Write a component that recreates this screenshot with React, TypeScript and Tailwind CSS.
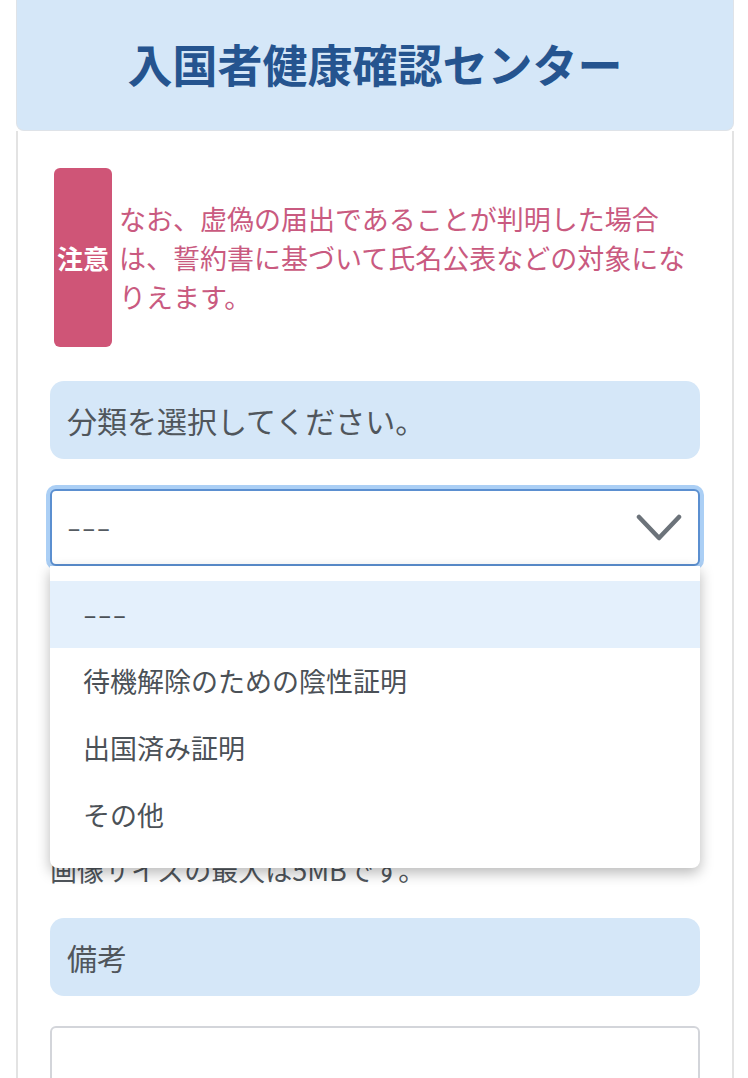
import React from 'react';

const font = { fontFamily: '"Noto Sans CJK JP", "Noto Sans", sans-serif' };

const options = ['---', '待機解除のための陰性証明', '出国済み証明', 'その他'];

const Dashes = () => <span className="inline-block origin-left scale-x-[1.5] tracking-[0.5px]">---</span>;

const App = () => {
  return (
    <div className="min-h-[1078px] bg-white" style={font}>
      {/* Header */}
      <div className="ml-[16px] w-[718px] h-[131px] bg-[#d5e7f8] rounded-b-[8px] border border-t-0 border-[#dfe3e8] flex items-center justify-center pb-[4px]">
        <h1 className="text-[45px] font-bold text-[#25548f] leading-none">入国者健康確認センター</h1>
      </div>

      {/* Card */}
      <div className="ml-[16px] w-[718px] border-x-2 border-[#e3e3e3] px-[32px] pt-[37px] pb-[40px]">
        {/* Caution */}
        <div className="flex items-center gap-[7px] pl-[4px]">
          <div className="w-[58px] h-[179px] bg-[#cf5577] rounded-[6px] flex items-center justify-center shrink-0">
            <span className="text-white font-bold text-[26px] leading-none">注意</span>
          </div>
          <p className="text-[27px] leading-[39px] text-[#c95a80] whitespace-nowrap">
            なお、虚偽の届出であることが判明した場合
            <br />
            は、誓約書に基づいて氏名公表などの対象にな
            <br />
            りえます。
          </p>
        </div>

        {/* Category label */}
        <div className="mt-[34px] h-[78px] bg-[#d5e7f8] rounded-[14px] flex items-center px-[17px]">
          <span className="text-[30px] text-[#50565c]">分類を選択してください。</span>
        </div>

        {/* Select with open list */}
        <div className="relative mt-[30px]">
          <div className="h-[77px] rounded-[6px] border-2 border-[#5b8fd0] ring-4 ring-[#abcff5] bg-white flex items-center justify-between pl-[15px] pr-[16px]">
            <span className="text-[27px] text-[#555b61]"><Dashes /></span>
            <svg width="46" height="28" viewBox="0 0 46 28" fill="none">
              <path d="M3 3 L23 24 L43 3" stroke="#6c737a" strokeWidth="4.5" strokeLinecap="round" strokeLinejoin="round" />
            </svg>
          </div>

          <div className="absolute left-0 right-0 top-[77px] z-10 bg-white rounded-b-[8px] shadow-[0_5px_14px_rgba(0,0,0,0.28)] pt-[15px] pb-[19px]">
            {options.map((o, i) => (
              <div
                key={o}
                className={`h-[67px] flex items-center pl-[33px] text-[27px] text-[#4b5157] ${i === 0 ? 'bg-[#e4f0fc]' : ''}`}
              >
                {i === 0 ? <Dashes /> : o}
              </div>
            ))}
          </div>

          {/* Underlying fields (covered by the list) */}
          <div className="mt-[30px] h-[78px] bg-[#d5e7f8] rounded-[14px]" />
          <div className="mt-[30px] h-[76px] rounded-[6px] border border-[#cfd3d8]" />
          <p className="mt-[70px] text-[27px] leading-[39px] text-[#50565c]">画像サイズの最大は5MBです。</p>
        </div>

        {/* Remarks */}
        <div className="mt-[29px] h-[78px] bg-[#d5e7f8] rounded-[14px] flex items-center px-[17px]">
          <span className="text-[30px] text-[#50565c]">備考</span>
        </div>
        <div className="mt-[30px] h-[160px] rounded-[6px] border-2 border-[#d3d5da] bg-white" />
      </div>
    </div>
  );
};

export default App;
